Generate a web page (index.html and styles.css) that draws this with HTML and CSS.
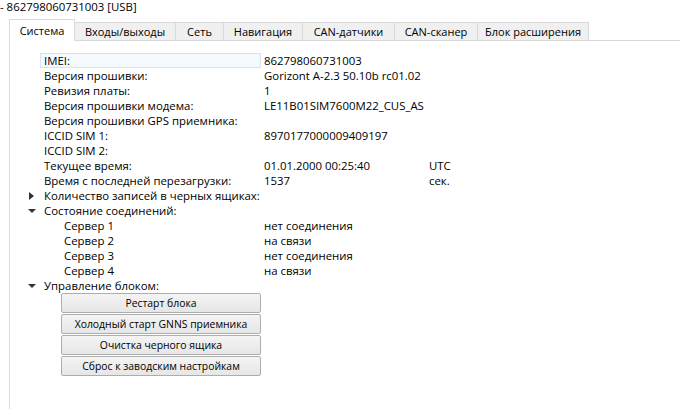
FILE: index.html
```html
<!DOCTYPE html>
<html lang="ru">
<head>
<meta charset="utf-8">
<link rel="stylesheet" href="styles.css">
</head>
<body>
<div class="title">- 862798060731003 [USB]</div>
<div class="tabs">
  <div class="tab active">Система</div>
  <div class="tab">Входы/выходы</div>
  <div class="tab">Сеть</div>
  <div class="tab">Навигация</div>
  <div class="tab">CAN-датчики</div>
  <div class="tab">CAN-сканер</div>
  <div class="tab">Блок расширения</div>
</div>
<div class="panel">
  <div class="tree">
    <div class="row"><span class="arrow"></span><span class="label sel">IMEI:</span><span class="value">862798060731003</span></div>
    <div class="row"><span class="arrow"></span><span class="label">Версия прошивки:</span><span class="value">Gorizont A-2.3 50.10b rc01.02</span></div>
    <div class="row"><span class="arrow"></span><span class="label">Ревизия платы:</span><span class="value">1</span></div>
    <div class="row"><span class="arrow"></span><span class="label">Версия прошивки модема:</span><span class="value">LE11B01SIM7600M22_CUS_AS</span></div>
    <div class="row"><span class="arrow"></span><span class="label">Версия прошивки GPS приемника:</span><span class="value"></span></div>
    <div class="row"><span class="arrow"></span><span class="label">ICCID SIM 1:</span><span class="value">8970177000009409197</span></div>
    <div class="row"><span class="arrow"></span><span class="label">ICCID SIM 2:</span><span class="value"></span></div>
    <div class="row"><span class="arrow"></span><span class="label">Текущее время:</span><span class="value">01.01.2000 00:25:40</span><span class="unit">UTC</span></div>
    <div class="row"><span class="arrow"></span><span class="label">Время с последней перезагрузки:</span><span class="value">1537</span><span class="unit">сек.</span></div>
    <div class="row"><span class="arrow closed"></span><span class="label wide">Количество записей в черных ящиках:</span></div>
    <div class="row"><span class="arrow open"></span><span class="label">Состояние соединений:</span></div>
    <div class="row sub"><span class="arrow"></span><span class="label">Сервер 1</span><span class="value">нет соединения</span></div>
    <div class="row sub"><span class="arrow"></span><span class="label">Сервер 2</span><span class="value">на связи</span></div>
    <div class="row sub"><span class="arrow"></span><span class="label">Сервер 3</span><span class="value">нет соединения</span></div>
    <div class="row sub"><span class="arrow"></span><span class="label">Сервер 4</span><span class="value">на связи</span></div>
    <div class="row"><span class="arrow open"></span><span class="label">Управление блоком:</span></div>
  </div>
  <div class="buttons">
    <button class="btn">Рестарт блока</button>
    <button class="btn">Холодный старт GNNS приемника</button>
    <button class="btn">Очистка черного ящика</button>
    <button class="btn">Сброс к заводским настройкам</button>
  </div>
</div>
</body>
</html>
```
FILE: styles.css
```css
html, body {
  margin: 0;
  padding: 0;
  background: #ffffff;
}
body {
  width: 680px;
  height: 409px;
  overflow: hidden;
  font-family: "Open Sans", "Noto Sans", sans-serif;
  font-size: 11.4px;
  color: #000;
}
.title {
  height: 19px;
  line-height: 13px;
  margin-top: -1px;
  padding-top: 1px;
}
.tabs {
  display: flex;
  align-items: flex-end;
  margin-left: 9px;
  height: 21px;
  border-bottom: 1px solid #d9d9d9;
}
.tab {
  box-sizing: border-box;
  height: 18px;
  line-height: 17px;
  padding: 0;
  text-align: center;
  font-size: 11px;
  background: #f0f0f0;
  border: 1px solid #d9d9d9;
  border-bottom: none;
  border-left: none;
  white-space: nowrap;
}
.tab:nth-child(2) { width: 101px; }
.tab:nth-child(3) { width: 48px; }
.tab:nth-child(4) { width: 79px; }
.tab:nth-child(5) { width: 92px; }
.tab:nth-child(6) { width: 83px; }
.tab:nth-child(7) { width: 111px; }
.tab.active {
  width: 66px;
  height: 22px;
  margin-bottom: -1px;
  background: #ffffff;
  border-left: 1px solid #d9d9d9;
  line-height: 22px;
}
.panel {
  margin-left: 9px;
  border-left: 1px solid #d9d9d9;
  height: 370px;
  padding-top: 12px;
}
.tree {
  display: flex;
  flex-direction: column;
}
.row {
  display: grid;
  grid-template-columns: 16px 220px 165px auto;
  height: 15px;
  line-height: 15px;
  padding-left: 18px;
  white-space: nowrap;
}
.row.sub {
  grid-template-columns: 36px 200px 165px auto;
}
.label.sel {
  background: #f5faff;
  outline: 1px solid #d2e4f6;
  margin: 1px 0 0 -3px;
  padding-left: 3px;
  width: 216px;
  height: 13px;
  line-height: 13px;
}
.arrow {
  position: relative;
}
.arrow.closed::before {
  content: "";
  position: absolute;
  left: 1px;
  top: 4px;
  border-left: 5px solid #333;
  border-top: 4px solid transparent;
  border-bottom: 4px solid transparent;
}
.arrow.open::before {
  content: "";
  position: absolute;
  left: 0;
  top: 6px;
  border-top: 4px solid #333;
  border-left: 4px solid transparent;
  border-right: 4px solid transparent;
}
.buttons {
  display: flex;
  flex-direction: column;
  gap: 1px;
  margin-left: 51px;
  margin-top: 0;
  width: 200px;
}
.btn {
  height: 20px;
  padding: 0;
  font-family: "Open Sans", "Noto Sans", sans-serif;
  font-size: 10.4px;
  color: #000;
  background: linear-gradient(#f4f4f4, #e6e6e6);
  border: 1px solid #adadad;
  border-radius: 2px;
}
```
